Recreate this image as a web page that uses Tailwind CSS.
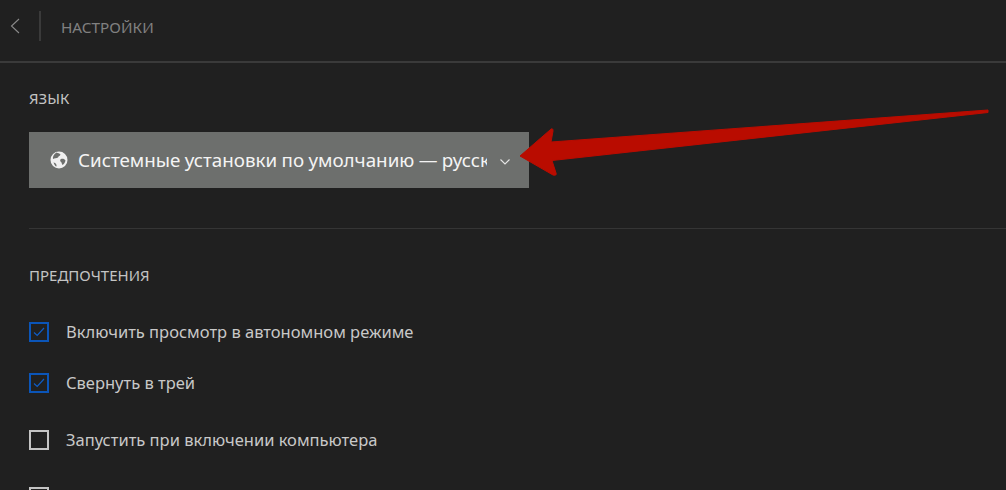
<!DOCTYPE html>
<html lang="ru">
<head>
    <meta charset="UTF-8">
    <meta name="viewport" content="width=device-width, initial-scale=1.0">
    <title>Настройки</title>
    <script src="https://cdn.jsdelivr.net/npm/@tailwindcss/browser@4"></script>
</head>
<body class="bg-[#202020] font-['Noto_Sans',sans-serif] overflow-hidden">
    <div class="relative h-[490px] overflow-hidden">
        <!-- header -->
        <header class="h-[63px] flex items-start border-b-2 border-[#3a3a3a]">
            <button class="w-[39px] h-[52px] pl-[10px] flex items-center">
                <svg width="10" height="16" viewBox="0 0 10 16" fill="none" stroke="#8a8a8a" stroke-width="1.1"><path d="M9 1 L1.5 8 L9 15"/></svg>
            </button>
            <div class="mt-[11px] w-0.5 h-[30px] bg-[#3a3a3a]"></div>
            <h1 class="ml-5 mt-[16px] text-[15.3px] leading-[22px] text-[#808080]">НАСТРОЙКИ</h1>
        </header>

        <main class="pl-[29px]">
            <section class="h-[166px] border-b border-[#353535]">
                <h2 class="pt-[24px] text-[15px] leading-[22px] text-[#c4c4c4]">ЯЗЫК</h2>
                <div class="mt-[23px] w-[500px] h-14 bg-[#6d6f6d] flex items-center pl-[21px]">
                    <svg width="18" height="18" viewBox="0 0 18 18"><circle cx="9" cy="9" r="8.5" fill="#f0f0f0"/><path d="M6.500 1.500 C8 2 9.500 2.500 10.500 3.500 C10 5 8.500 5 8 6.500 C6.500 7.500 4.500 7 3 8 C2.500 6 3.500 3.500 6.500 1.500Z M11 8 C13 7.500 14.500 8 15.500 9.500 C15 11.500 14 13 12.500 14 C11.500 12.500 12 11.500 10.500 10.500 C10 9.500 10 8.500 11 8Z M3.500 11.500 C5 11.500 6 12.500 6.500 14 C6.500 15 6.500 15.500 6 15.500 C5 14.500 4 13 3.500 11.500Z" fill="#6d6f6d"/></svg>
                    <span class="ml-[10px] w-[409px] overflow-hidden whitespace-nowrap text-[18.8px] leading-[26px] text-[#f4f4f4] [word-spacing:-0.5px] mb-px">Системные установки по умолчанию — русский</span>
                    <svg class="ml-[13px] mt-[3px]" width="10" height="6" viewBox="0 0 10 6" fill="none" stroke="#e6e6e6" stroke-width="1.1"><path d="M0.5 0.5 L5 5 L9.5 0.5"/></svg>
                </div>
            </section>

            <section>
                <h2 class="pt-[35px] text-[15px] leading-[22px] text-[#c4c4c4]">ПРЕДПОЧТЕНИЯ</h2>
                <ul class="mt-[36px] text-[16.5px] leading-5 text-[#c8c8c8]">
                    <li class="h-[51px] flex items-start">
                        <span class="w-5 h-5 border-2 border-[#0b55b8] flex items-center justify-center">
                            <svg width="12" height="10" viewBox="0 0 12 10" fill="none" stroke="#0f5cc4" stroke-width="1.2"><path d="M1 5.500 L4.200 8.500 L11 1"/></svg>
                        </span>
                        <span class="ml-[17px]">Включить просмотр в автономном режиме</span>
                    </li>
                    <li class="h-[57px] flex items-start">
                        <span class="w-5 h-5 border-2 border-[#0b55b8] flex items-center justify-center">
                            <svg width="12" height="10" viewBox="0 0 12 10" fill="none" stroke="#0f5cc4" stroke-width="1.2"><path d="M1 5.500 L4.200 8.500 L11 1"/></svg>
                        </span>
                        <span class="ml-[17px]">Свернуть в трей</span>
                    </li>
                    <li class="h-[57px] flex items-start">
                        <span class="w-5 h-5 border-2 border-[#c4c4c4]"></span>
                        <span class="ml-[17px]">Запустить при включении компьютера</span>
                    </li>
                    <li class="flex items-start">
                        <span class="w-5 h-5 border-2 border-[#c4c4c4]"></span>
                    </li>
                </ul>
            </section>
        </main>

        <!-- red annotation arrow -->
        <svg class="absolute left-0 top-0 pointer-events-none" width="1006" height="490" viewBox="0 0 1006 490">
            <path d="M988 110 L988 112.500 L552 160.500 L556 173 Q557 176 553 175 L520 156 L550 130 Q553 127 553 131 L551 142 Z" fill="#b90c00" stroke="#b90c00" stroke-width="1" stroke-linejoin="round"/>
        </svg>
    </div>
</body>
</html>
